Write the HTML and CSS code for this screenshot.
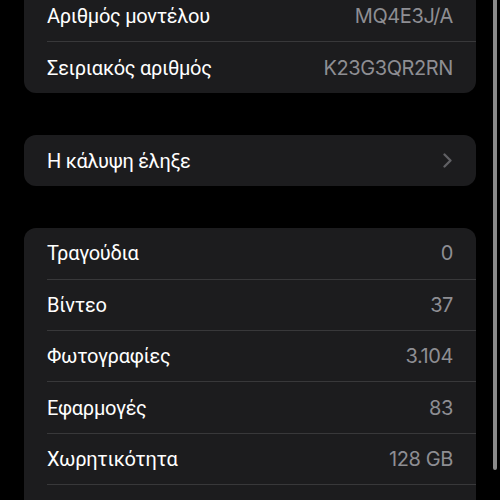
FILE: index.html
```html
<!DOCTYPE html>
<html lang="el">
<head>
  <meta charset="UTF-8">
  <title>Πληροφορίες</title>
  <link rel="stylesheet" href="styles.css">
</head>
<body>

  <div class="scroller">

    <div class="group">
      <div class="row">
        <span class="label">Όνομα μοντέλου</span>
        <span class="value">iPhone 14</span>
      </div>
      <div class="row">
        <span class="label">Αριθμός μοντέλου</span>
        <span class="value">MQ4E3J/A</span>
      </div>
      <div class="row">
        <span class="label">Σειριακός αριθμός</span>
        <span class="value">K23G3QR2RN</span>
      </div>
    </div>

    <div class="group">
      <div class="row">
        <span class="label">Η κάλυψη έληξε</span>
        <svg class="chevron" width="9" height="15" viewBox="0 0 9 15">
          <path d="M1.5 1.5 L7.5 7.5 L1.5 13.5" fill="none" stroke="#606064" stroke-width="2.3" stroke-linecap="round" stroke-linejoin="round"/>
        </svg>
      </div>
    </div>

    <div class="group">
      <div class="row">
        <span class="label">Τραγούδια</span>
        <span class="value">0</span>
      </div>
      <div class="row">
        <span class="label">Βίντεο</span>
        <span class="value">37</span>
      </div>
      <div class="row">
        <span class="label">Φωτογραφίες</span>
        <span class="value">3.104</span>
      </div>
      <div class="row">
        <span class="label">Εφαρμογές</span>
        <span class="value">83</span>
      </div>
      <div class="row">
        <span class="label">Χωρητικότητα</span>
        <span class="value">128 GB</span>
      </div>
      <div class="row">
        <span class="label">Διαθέσιμα</span>
        <span class="value">52,3 GB</span>
      </div>
    </div>

  </div>

  <div class="scroll-indicator"></div>

</body>
</html>
```

FILE: styles.css
```css
html, body {
  margin: 0;
  height: 100%;
  overflow: hidden;
}
body {
  background-color: #000;
  font-family: Inter, "Noto Sans", sans-serif;
  color: #fff;
  position: relative;
}
.scroller {
  margin-top: -60.5px;
  padding: 0 24px;
}
.group {
  background: #1c1c1e;
  border-radius: 12px;
  margin-bottom: 42px;
  overflow: hidden;
}
.row {
  display: flex;
  align-items: center;
  justify-content: space-between;
  height: 51.4px;
  margin-left: 23px;
  padding-right: 23px;
  box-sizing: border-box;
  border-bottom: 1px solid #38383a;
}
.row:last-child {
  border-bottom: none;
  height: 51px;
}
.label {
  font-family: Roboto, "Noto Sans", sans-serif;
  font-size: 20px;
  letter-spacing: -0.3px;
}
.value {
  font-size: 20px;
  letter-spacing: -0.4px;
  color: #8e8e93;
}
.chevron {
  margin-right: 1px;
}
.scroll-indicator {
  position: absolute;
  top: 0;
  right: 3px;
  width: 4px;
  height: 470px;
  background: #8a8a8a;
  border-radius: 0 0 2px 2px;
}
```
